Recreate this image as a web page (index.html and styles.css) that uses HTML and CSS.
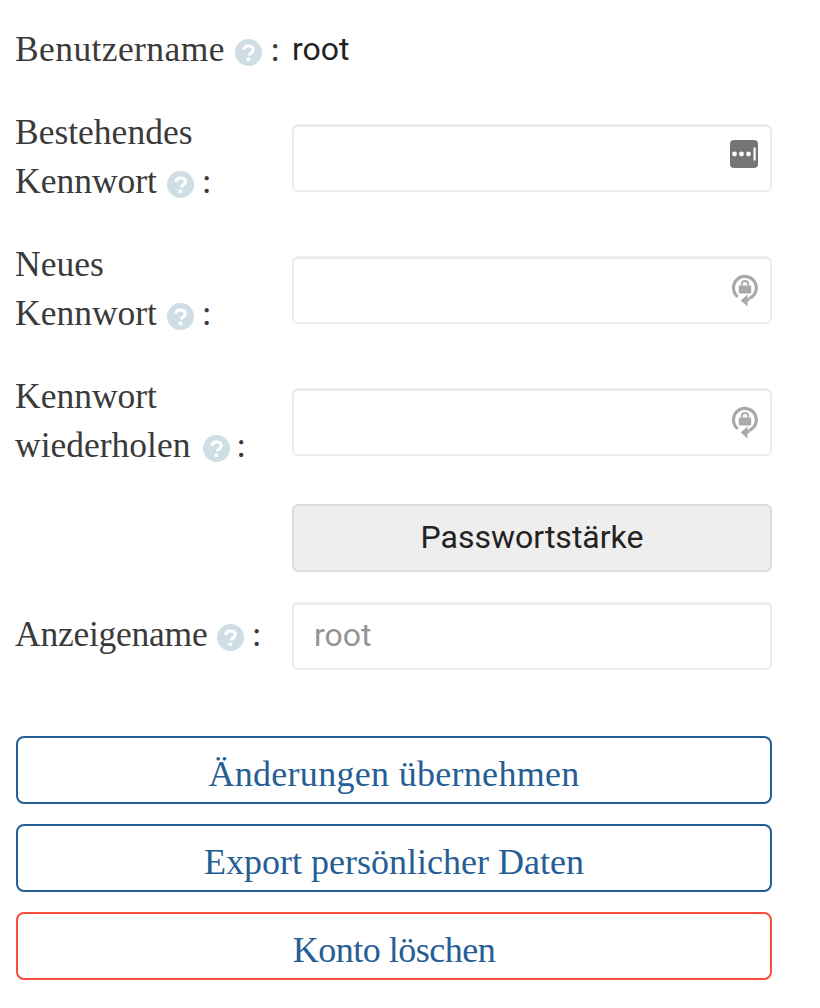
FILE: index.html
```html
<!DOCTYPE html>
<html lang="de">
<head>
<meta charset="utf-8">
<title>Konto</title>
<link rel="stylesheet" href="styles.css">
</head>
<body>
<svg class="defs" width="0" height="0" aria-hidden="true">
  <symbol id="help" viewBox="0 0 27 27">
    <circle cx="13.5" cy="13.5" r="13.5" fill="#cfdde4"/>
    <path d="M8.800 10.800c.3-2.500 2.200-3.800 4.700-3.800 2.800 0 4.700 1.500 4.700 3.800 0 1.800-1.100 2.700-2.400 3.500-1 .7-1.300 1.200-1.300 2.300" fill="none" stroke="#fff" stroke-width="3.200"/>
    <rect x="11.700" y="18.600" width="3.400" height="3.400" fill="#fff"/>
  </symbol>
  <symbol id="cycle" viewBox="0 0 28 33">
    <path d="M6.800 22.800A11.400 11.400 0 1 1 18 24.500" fill="none" stroke="#a9a9a9" stroke-width="3.200"/>
    <path d="M18 25.200c-1.800.8-3.500 1.200-5 1.200" fill="none" stroke="#a9a9a9" stroke-width="3.200"/>
    <path d="M16.500 20.500v12L9.700 26.500z" fill="#a9a9a9"/>
    <rect x="7.800" y="11.500" width="12.400" height="8" rx="1.200" fill="#a9a9a9"/>
    <path d="M10.800 11.500V10.200a3.200 3.200 0 0 1 6.400 0v1.300" fill="none" stroke="#a9a9a9" stroke-width="1.800"/>
  </symbol>
</svg>
<form class="account">
  <div class="row row-user">
    <div class="label label-user">Benutzername <svg class="help"><use href="#help"/></svg> :</div>
    <div class="value">root</div>
  </div>
  <div class="row">
    <div class="label">Bestehendes<br>Kennwort <svg class="help"><use href="#help"/></svg> :</div>
    <div class="field">
      <input class="input" type="text">
      <svg class="key" viewBox="0 0 28 28" aria-hidden="true">
        <rect width="28" height="28" rx="4" fill="#757575"/>
        <circle cx="4.500" cy="14" r="2.400" fill="#fff"/>
        <circle cx="11.500" cy="14" r="2.400" fill="#fff"/>
        <circle cx="18.500" cy="14" r="2.400" fill="#fff"/>
        <rect x="23.500" y="7.500" width="2.200" height="13" fill="#fff"/>
      </svg>
    </div>
  </div>
  <div class="row">
    <div class="label">Neues<br>Kennwort <svg class="help"><use href="#help"/></svg> :</div>
    <div class="field">
      <input class="input" type="text">
      <svg class="cycle"><use href="#cycle"/></svg>
    </div>
  </div>
  <div class="row row-repeat">
    <div class="label">Kennwort<br>wiederholen <svg class="help help-repeat"><use href="#help"/></svg> :</div>
    <div class="field">
      <input class="input" type="text">
      <svg class="cycle"><use href="#cycle"/></svg>
    </div>
  </div>
  <div class="row row-strength">
    <div class="label"></div>
    <button class="strength" type="button">Passwortstärke</button>
  </div>
  <div class="row row-display">
    <div class="label label-display">Anzeigename <svg class="help"><use href="#help"/></svg> :</div>
    <div class="field"><input class="input" type="text" placeholder="root"></div>
  </div>
  <div class="actions">
    <button class="action action-save" type="button">Änderungen übernehmen</button>
    <button class="action" type="button">Export persönlicher Daten</button>
    <button class="action danger" type="button">Konto löschen</button>
  </div>
</form>
</body>
</html>
```

FILE: styles.css
```css
* { box-sizing: border-box; }
html, body { margin: 0; padding: 0; background: #fff; }
body { width: 820px; height: 1008px; overflow: hidden; }
.defs { position: absolute; }
.account { margin-left: 15px; padding-top: 26px; width: 757px; }
.row { display: flex; align-items: center; margin-bottom: 34px; }
.row-user { height: 49px; }
.row-repeat { margin-bottom: 33px; }
.row-strength { margin-bottom: 30px; }
.row-display { margin-bottom: 66px; }
.label {
  flex: 0 0 277px;
  font-family: "Liberation Serif", "Times New Roman", serif;
  font-size: 35.5px;
  line-height: 49px;
  color: #3a3a3a;
  white-space: nowrap;
  position: relative;
  top: -1px;
}
.label-user { letter-spacing: 0.4px; }
.label-display { letter-spacing: -0.25px; top: -2px; }
.help { display: inline-block; width: 27px; height: 27px; vertical-align: -5px; margin: 0 -1px 0 1px; }
.help-repeat { margin-left: 4px; margin-right: -3px; }
.value {
  font-family: Roboto, sans-serif;
  font-size: 32px;
  color: #222;
  position: relative;
  top: -2px;
}
.field { position: relative; flex: 0 0 480px; height: 68px; }
.input {
  display: block;
  width: 100%;
  height: 68px;
  padding: 0 20px 4px;
  border: 2px solid #ececec;
  border-top-width: 3px;
  border-radius: 6px;
  background: #fff;
  font-family: Roboto, sans-serif;
  font-size: 32px;
  color: #222;
  outline: none;
}
.input::placeholder { color: #949494; opacity: 1; }
.key { position: absolute; top: 16px; right: 14px; width: 28px; height: 28px; }
.cycle { position: absolute; top: 18px; right: 13px; width: 28px; height: 33px; }
.strength {
  flex: 0 0 480px;
  height: 68px;
  border: 2px solid #dcdcdc;
  border-radius: 6px;
  background: #eee;
  font-family: Roboto, sans-serif;
  font-size: 32px;
  color: #222;
  padding: 0 0 3px;
}
.actions { display: flex; flex-direction: column; gap: 20px; margin-left: 1px; }
.action {
  height: 68px;
  width: 756px;
  border: 2px solid #255d95;
  border-radius: 8px;
  background: #fff;
  font-family: "Liberation Serif", "Times New Roman", serif;
  font-size: 36px;
  color: #255d95;
  padding: 8px 0 0;
}
.action-save { letter-spacing: 0.3px; }
.danger { border-color: #f94f3a; letter-spacing: -0.5px; }
```
